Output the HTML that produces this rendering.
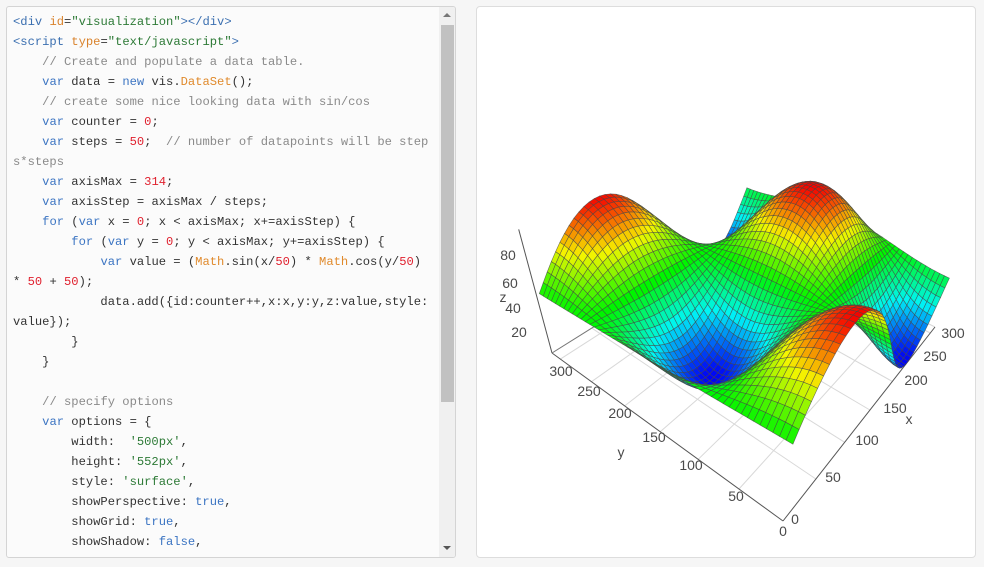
<!DOCTYPE html>
<html><head><meta charset="utf-8"><style>
body{margin:0;width:984px;height:567px;background:#f6f6f6;position:relative;overflow:hidden;font-family:"Liberation Sans",sans-serif}
#code{position:absolute;left:6px;top:6px;width:448px;height:550px;background:#fbfbfb;border:1px solid #d4d4d4;border-radius:3px;overflow:hidden}
pre{margin:0;position:absolute;left:6px;top:5px;font-family:"Liberation Mono",monospace;font-size:12.15px;line-height:20px;color:#333}
.t{color:#3b6fb0}.a{color:#d9822b}.s{color:#2d7a36}.c{color:#8a8a8a}.k{color:#3b74c2}.n{color:#e0202e}.f{color:#e08a2c}
#sb{position:absolute;left:432px;top:0;width:16px;height:550px;background:#f0f0f0}
#th{position:absolute;left:2px;top:18px;width:13px;height:377px;background:#c1c1c1}
#viz{position:absolute;left:476px;top:6px;width:498px;height:550px;background:#fff;border:1px solid #ddd;border-radius:4px}
.l{position:absolute;font-size:14px;color:#4a4a4a;transform:translate(-50%,-50%);white-space:nowrap}
</style></head><body>
<div id="code"><pre><span class="t">&lt;div</span> <span class="a">id</span>=<span class="s">"visualization"</span><span class="t">&gt;&lt;/div&gt;</span>
<span class="t">&lt;script</span> <span class="a">type</span>=<span class="s">"text/javascript"</span><span class="t">&gt;</span>
    <span class="c">// Create and populate a data table.</span>
    <span class="k">var</span> data = <span class="k">new</span> vis.<span class="f">DataSet</span>();
    <span class="c">// create some nice looking data with sin/cos</span>
    <span class="k">var</span> counter = <span class="n">0</span>;
    <span class="k">var</span> steps = <span class="n">50</span>;  <span class="c">// number of datapoints will be step</span>
<span class="c">s*steps</span>
    <span class="k">var</span> axisMax = <span class="n">314</span>;
    <span class="k">var</span> axisStep = axisMax / steps;
    <span class="k">for</span> (<span class="k">var</span> x = <span class="n">0</span>; x &lt; axisMax; x+=axisStep) {
        <span class="k">for</span> (<span class="k">var</span> y = <span class="n">0</span>; y &lt; axisMax; y+=axisStep) {
            <span class="k">var</span> value = (<span class="f">Math</span>.sin(x/<span class="n">50</span>) * <span class="f">Math</span>.cos(y/<span class="n">50</span>)
* <span class="n">50</span> + <span class="n">50</span>);
            data.add({id:counter++,x:x,y:y,z:value,style:
value});
        }
    }

    <span class="c">// specify options</span>
    <span class="k">var</span> options = {
        width:  <span class="s">'500px'</span>,
        height: <span class="s">'552px'</span>,
        style: <span class="s">'surface'</span>,
        showPerspective: <span class="k">true</span>,
        showGrid: <span class="k">true</span>,
        showShadow: <span class="k">false</span>,</pre>
<div id="sb"><div id="th"></div>
<div style="position:absolute;left:4px;top:6px;border:4px solid transparent;border-bottom:4px solid #777;border-top:0"></div>
<div style="position:absolute;left:4px;top:539px;border:4px solid transparent;border-top:4px solid #555;border-bottom:0"></div></div>
</div>
<div id="viz"></div>
<svg id="plot" width="984" height="567" style="position:absolute;left:0;top:0"></svg>
<div class="l" style="left:795px;top:519px">0</div><div class="l" style="left:833px;top:477px">50</div>
<div class="l" style="left:867px;top:440px">100</div><div class="l" style="left:895px;top:408px">150</div>
<div class="l" style="left:916px;top:380px">200</div><div class="l" style="left:935px;top:356px">250</div>
<div class="l" style="left:953px;top:333px">300</div><div class="l" style="left:909px;top:419px">x</div>
<div class="l" style="left:561px;top:371px">300</div><div class="l" style="left:589px;top:391px">250</div>
<div class="l" style="left:620px;top:413px">200</div><div class="l" style="left:654px;top:437px">150</div>
<div class="l" style="left:691px;top:465px">100</div><div class="l" style="left:736px;top:496px">50</div>
<div class="l" style="left:783px;top:531px">0</div><div class="l" style="left:621px;top:452px">y</div>
<div class="l" style="left:508px;top:255px">80</div><div class="l" style="left:510px;top:283px">60</div>
<div class="l" style="left:513px;top:308px">40</div><div class="l" style="left:519px;top:332px">20</div>
<div class="l" style="left:503px;top:297px">z</div>
<script>
(function(){
var src=[[0,0],[314,0],[314,314],[0,314]],dst=[[783,521],[935,327],[745,232],[552,353]];
var A=[],b=[];
for(var i=0;i<4;i++){var u=src[i][0],v=src[i][1],X=dst[i][0],Y=dst[i][1];
A.push([u,v,1,0,0,0,-u*X,-v*X]);b.push(X);A.push([0,0,0,u,v,1,-u*Y,-v*Y]);b.push(Y);}
var n=8;for(var c=0;c<n;c++){var p=c;for(var r=c+1;r<n;r++)if(Math.abs(A[r][c])>Math.abs(A[p][c]))p=r;
var t=A[c];A[c]=A[p];A[p]=t;t=b[c];b[c]=b[p];b[p]=t;
for(var r=0;r<n;r++)if(r!=c){var f=A[r][c]/A[c][c];for(var k=c;k<n;k++)A[r][k]-=f*A[c][k];b[r]-=f*b[c];}}
var h=[];for(var i=0;i<n;i++)h.push(b[i]/A[i][i]);
function base(u,v){var W=h[6]*u+h[7]*v+1;return[(h[0]*u+h[1]*v+h[2])/W,(h[3]*u+h[4]*v+h[5])/W,W];}
var V=[723,988];
function P(u,v,z){var q=base(u,v);var hh=1.28+(q[1]-353)*0.0016;if(hh<0.5)hh=0.5;
var dx=q[0]-V[0],dy=q[1]-V[1],L=Math.sqrt(dx*dx+dy*dy);var f=hh/L*z;
return[q[0]+dx*f,q[1]+dy*f,q[1]];}
var s='';
function line(p,q,col,w){s+='<line x1="'+p[0].toFixed(1)+'" y1="'+p[1].toFixed(1)+'" x2="'+q[0].toFixed(1)+'" y2="'+q[1].toFixed(1)+'" stroke="'+col+'" stroke-width="'+w+'"/>';}
for(var g=50;g<=300;g+=50){line(P(g,0,0),P(g,314,0),'#d8d8d8',1);line(P(0,g,0),P(314,g,0),'#d8d8d8',1);}
line(P(0,314,0),P(314,314,0),'#d8d8d8',1);line(P(314,0,0),P(314,314,0),'#d8d8d8',1);
line(P(0,0,0),P(314,0,0),'#555',1);line(P(0,0,0),P(0,314,0),'#555',1);line(P(0,314,0),P(0,314,100),'#555',1);
line(P(0,314,0),P(60,314,0),'#777',1);
var st=314/50,pts=[];
for(var i=0;i<50;i++){pts[i]=[];for(var j=0;j<50;j++){var x=i*st,y=j*st;var z=Math.sin(x/50)*Math.cos(y/50)*50+50;pts[i][j]=[P(x,y,z),z];}}
var q=[];
for(var i=0;i<49;i++)for(var j=0;j<49;j++){var c=[pts[i][j],pts[i+1][j],pts[i+1][j+1],pts[i][j+1]];
var d=base((i+.5)*st,(j+.5)*st)[1];var z=(c[0][1]+c[1][1]+c[2][1]+c[3][1])/4;q.push([d,c,z]);}
q.sort(function(a,b){return a[0]-b[0];});
q.forEach(function(o){var hue=(1-o[2]/100)*240;
s+='<polygon points="'+o[1].map(function(e){return e[0][0].toFixed(1)+','+e[0][1].toFixed(1)}).join(' ')+'" fill="hsl('+hue.toFixed(0)+',100%,48%)" stroke="rgba(70,70,70,0.75)" stroke-width="0.6"/>';});
document.getElementById('plot').innerHTML=s;
})();
</script>
</body></html>
